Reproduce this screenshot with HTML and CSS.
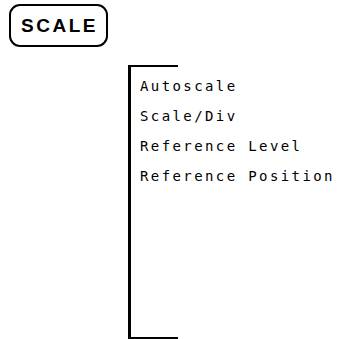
FILE: index.html
```html
<!DOCTYPE html>
<html>
<head>
  <title>Scale menu</title>
  <link rel="stylesheet" href="styles.css">
</head>
<body>
  <div class="key">SCALE</div>

  <div class="menu">
    <div class="cap"></div>
    <ul class="items">
      <li>Autoscale</li>
      <li>Scale/Div</li>
      <li>Reference Level</li>
      <li>Reference Position</li>
    </ul>
    <div class="cap"></div>
  </div>
</body>
</html>
```

FILE: styles.css
```css
body {
  margin: 0;
  padding: 4px 0 0 9px;
  background-color: #ffffff;
  color: #000;
  font-family: "Liberation Sans", Arial, sans-serif;
}

.key {
  box-sizing: border-box;
  width: 99px;
  height: 43px;
  border: 2px solid #000;
  border-radius: 11px;
  display: flex;
  justify-content: center;
  align-items: center;
  font-size: 19px;
  font-weight: bold;
  letter-spacing: 2.5px;
  padding-left: 2px;
}

.menu {
  box-sizing: border-box;
  margin: 18px 0 0 119px;
  height: 274px;
  border-left: 3px solid #000;
  display: flex;
  flex-direction: column;
}

.cap {
  width: 47px;
  height: 2px;
  background-color: #000;
}

.items {
  list-style: none;
  margin: 0;
  padding: 4px 0 0 9px;
  flex: 1;
  font-family: "DejaVu Sans Mono", monospace;
  font-size: 14px;
  line-height: 30px;
  letter-spacing: 2.4px;
}
```
